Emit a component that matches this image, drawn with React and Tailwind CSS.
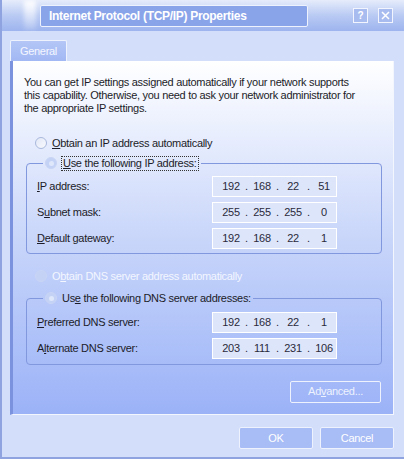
import React from "react";

function Radio({ checked, faded }) {
  return (
    <span
      className={`inline-flex items-center justify-center w-[12px] h-[12px] rounded-full border shrink-0 ${
        faded ? "border-[#c9d5f5] bg-[#c4d2f6]" : "border-[#a9b8dc] bg-gradient-to-br from-[#e2e8f7] to-[#f8f9fd]"
      }`}
    >
      {checked && <span className="w-[5px] h-[5px] rounded-full bg-[#dfe7fb]" />}
    </span>
  );
}

function IpField({ parts }) {
  return (
    <div className="flex items-center w-[125px] h-[21px] border border-white bg-[#dde5fb] pl-[7px] text-[#2a2a3a]">
      {parts.map((p, i) => (
        <React.Fragment key={i}>
          <span className="w-[22px] text-center">{p}</span>
          {i < 3 && <span className="w-[9px] text-center">.</span>}
        </React.Fragment>
      ))}
    </div>
  );
}

function Row({ label, parts }) {
  return (
    <div className="flex items-center h-[21px]">
      <span className="w-[175px]">{label}</span>
      <IpField parts={parts} />
    </div>
  );
}

export default function App() {
  return (
    <div
      className="w-[404px] h-[459px] overflow-hidden bg-[#d3defa] border-l-2 border-b-2 border-[#8ea3e0] flex flex-col text-[11px] tracking-[-0.3px] text-[#1c1c28]"
      style={{ fontFamily: '"Liberation Sans", Arial, sans-serif' }}
    >
      {/* TITLE BAR */}
      <div className="h-[31px] shrink-0 relative bg-gradient-to-b from-[#e6ecfb] via-[#b9caf3] to-[#9db4ee] flex items-center">
        <div className="absolute left-[22px] top-0 w-[12px] h-[31px] bg-gradient-to-b from-white/90 to-white/10 blur-[2px]" />
        <div className="ml-[38px] w-[268px] h-[22px] border border-[#eef2fd] rounded-[2px] bg-[#8aa4ea] flex items-center pl-[8px] text-white font-bold text-[12px]">
          Internet Protocol (TCP/IP) Properties
        </div>
        <div className="ml-auto mr-[11px] flex gap-[10px]">
          <span className="w-[15px] h-[15px] border border-[#f2f5fe] bg-[#a9bcf0] text-white text-[10px] font-bold flex items-center justify-center">?</span>
          <span className="w-[15px] h-[15px] border border-[#f2f5fe] bg-[#a9bcf0] flex items-center justify-center">
            <svg width="9" height="9" viewBox="0 0 9 9"><path d="M1 1L8 8M8 1L1 8" stroke="white" strokeWidth="1.5" /></svg>
          </span>
        </div>
      </div>

      {/* BODY */}
      <div className="flex-1 flex flex-col pt-[9px] pl-[8px]">
        {/* TAB */}
        <div className="w-[57px] h-[21px] bg-gradient-to-b from-[#b4c6f6] to-[#a2b8f4] border-t border-l border-r border-[#eef2fd] rounded-t-[2px] text-[#f4f6ff] flex items-center justify-center">
          General
        </div>

        {/* PANEL */}
        <div className="w-[384px] h-[354px] border-l-[3px] border-[#7b93df] border-r border-b border-r-[#f4f6fe] border-b-[#f4f6fe] bg-gradient-to-b from-white via-[#c9d6fa] to-[#9bb2f7] flex flex-col">
          <p className="mt-[15px] ml-[11px] w-[338px] leading-[13px]">
            You can get IP settings assigned automatically if your network supports this capability. Otherwise, you need to ask your network administrator for the appropriate IP settings.
          </p>

          <div className="mt-[20px] ml-[22px] flex items-center gap-[5px]">
            <Radio />
            <span><u>O</u>btain an IP address automatically</span>
          </div>

          {/* GROUP 1 */}
          <fieldset className="mt-[4px] ml-[13px] w-[356px] border border-[#8197de] rounded-[4px] pl-[10px] pr-[2px] pb-[4px] flex flex-col gap-[5px]">
            <legend className="ml-[6px] px-[2px] flex items-center gap-[4px]">
              <Radio checked faded />
              <span className="border border-dotted border-[#333] px-[1px] leading-[13px]"><u>U</u>se the following IP address:</span>
            </legend>
            <div />
            <Row label={<><u>I</u>P address:</>} parts={["192", "168", "22", "51"]} />
            <Row label={<>S<u>u</u>bnet mask:</>} parts={["255", "255", "255", "0"]} />
            <Row label={<><u>D</u>efault gateway:</>} parts={["192", "168", "22", "1"]} />
          </fieldset>

          <div className="mt-[14px] ml-[22px] flex items-center gap-[5px] text-[#f3f6ff]">
            <Radio faded />
            <span>O<u>b</u>tain DNS server address automatically</span>
          </div>

          {/* GROUP 2 */}
          <fieldset className="mt-[6px] ml-[13px] w-[356px] border border-[#8197de] rounded-[4px] pl-[10px] pr-[2px] pb-[5px] flex flex-col gap-[5px]">
            <legend className="ml-[6px] px-[2px] flex items-center gap-[5px]">
              <Radio checked faded />
              <span>Us<u>e</u> the following DNS server addresses:</span>
            </legend>
            <div />
            <Row label={<><u>P</u>referred DNS server:</>} parts={["192", "168", "22", "1"]} />
            <Row label={<>A<u>l</u>ternate DNS server:</>} parts={["203", "111", "231", "106"]} />
          </fieldset>

          <div className="mt-[16px] ml-[277px] w-[91px] h-[22px] border border-[#eef2fd] rounded-[2px] text-[#eef2fe] flex items-center justify-center">
            Ad<u>v</u>anced...
          </div>
        </div>

        {/* BUTTONS */}
        <div className="mt-[12px] flex justify-end gap-[7px] pr-[10px]">
          <button className="w-[74px] h-[22px] border border-[#eef2fd] rounded-[2px] bg-[#a8bcf5] text-white">OK</button>
          <button className="w-[74px] h-[22px] border border-[#eef2fd] rounded-[2px] bg-[#a8bcf5] text-white">Cancel</button>
        </div>
      </div>
    </div>
  );
}
